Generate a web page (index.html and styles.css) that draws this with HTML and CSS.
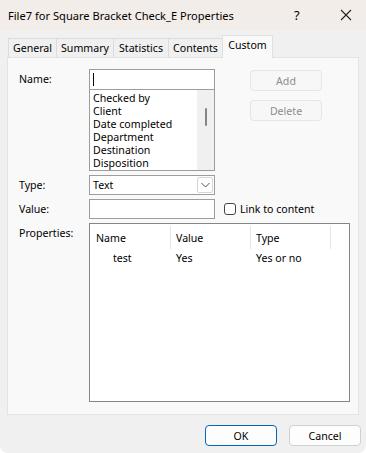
FILE: index.html
```html
<!DOCTYPE html>
<html lang="en">
<head>
    <meta charset="UTF-8">
    <title>File7 for Square Bracket Check_E Properties</title>
    <link rel="stylesheet" href="styles.css">
</head>
<body>
    <div class="window">
        <div class="titlebar">
            <span class="title">File7 for Square Bracket Check_E Properties</span>
            <span class="help">?</span>
            <span class="close">
                <svg width="12" height="12" viewBox="0 0 12 12"><path d="M1 1 L11 11 M11 1 L1 11" stroke="#222" stroke-width="1.1" fill="none"/></svg>
            </span>
        </div>

        <div class="tabs">
            <div class="tab tab-general">General</div>
            <div class="tab tab-summary">Summary</div>
            <div class="tab tab-stats">Statistics</div>
            <div class="tab tab-contents">Contents</div>
            <div class="tab tab-custom active">Custom</div>
        </div>

        <div class="panel">
            <div class="row row-name">
                <div class="lbl">Name:</div>
                <div class="combo">
                    <div class="field name-field"><span class="caret"></span></div>
                    <div class="listbox">
                        <ul>
                            <li>Checked by</li>
                            <li>Client</li>
                            <li>Date completed</li>
                            <li>Department</li>
                            <li>Destination</li>
                            <li>Disposition</li>
                        </ul>
                        <div class="scrollbar"><div class="thumb"></div></div>
                    </div>
                </div>
                <div class="side-buttons">
                    <button class="btn" disabled>Add</button>
                    <button class="btn" disabled>Delete</button>
                </div>
            </div>

            <div class="row">
                <div class="lbl">Type:</div>
                <div class="field select">
                    <span>Text</span>
                    <span class="drop">
                        <svg width="9" height="6" viewBox="0 0 9 6"><path d="M0.5 1 L4.5 5 L8.5 1" stroke="#555" stroke-width="1" fill="none"/></svg>
                    </span>
                </div>
            </div>

            <div class="row">
                <div class="lbl">Value:</div>
                <div class="field"></div>
                <label class="check"><span class="box"></span>Link to content</label>
            </div>

            <div class="row row-props">
                <div class="lbl">Properties:</div>
                <div class="listview">
                    <div class="lv-head">
                        <div class="col col-name">Name</div>
                        <div class="col col-value">Value</div>
                        <div class="col col-type">Type</div>
                    </div>
                    <div class="lv-row">
                        <div class="col col-name"><span class="indent">test</span></div>
                        <div class="col col-value">Yes</div>
                        <div class="col col-type">Yes or no</div>
                    </div>
                </div>
            </div>
        </div>

        <div class="footer">
            <button class="btn btn-default">OK</button>
            <button class="btn">Cancel</button>
        </div>
    </div>
</body>
</html>
```

FILE: styles.css
```css
/* --- 基本 --- */
body {
    margin: 0;
    background: #ffffff;
    font-family: "Noto Sans", "Open Sans", sans-serif;
    font-size: 10.6px;
    color: #000;
}

.window {
    width: 366px;
    height: 453px;
    background: #f0f0f0;
    border-radius: 0 0 8px 8px;
    overflow: hidden;
}

/* --- 標題列 --- */
.titlebar {
    height: 30px;
    background: #f3ede9;
    display: flex;
    align-items: center;
    font-size: 11.1px;
}

.title {
    padding-left: 8px;
    flex: 1;
}

.help {
    width: 14px;
    margin-right: 32px;
    font-size: 13px;
}

.close {
    display: flex;
    margin-right: 14px;
}

/* --- 分頁 --- */
.tabs {
    display: flex;
    align-items: flex-end;
    padding: 6px 0 0 8px;
    height: 21px;
    position: relative;
    z-index: 1;
}

.tab {
    height: 19px;
    line-height: 18px;
    text-align: center;
    border: 1px solid #dcdcdc;
    border-bottom: none;
    margin-right: -1px;
    background: #f0f0f0;
    box-sizing: border-box;
}

.tab-general { width: 49px; }
.tab-summary { width: 58px; }
.tab-stats { width: 56px; }
.tab-contents { width: 55px; }
.tab-custom { width: 51px; }

.tab.active {
    height: 23px;
    line-height: 19px;
    background: #f9f9f9;
    margin-bottom: -1px;
    border-color: #e0e0e0;
}

/* --- 內容面板 --- */
.panel {
    margin-left: 7px;
    width: 352px;
    border: 1px solid #e3e3e3;
    background: #f9f9f9;
    padding: 11px 0 0 11px;
    box-sizing: border-box;
    height: 358px;
}

.row {
    display: flex;
    align-items: center;
    margin-top: 4px;
}

.row-name {
    align-items: flex-start;
    margin-top: 0;
}

.lbl {
    width: 70px;
    flex-shrink: 0;
}

.row-name .lbl {
    padding-top: 3px;
}

.field {
    width: 126px;
    height: 20px;
    border: 1px solid #9d9d9d;
    background: #fff;
    box-sizing: border-box;
}

.combo {
    width: 126px;
}

.name-field {
    height: 21px;
    padding: 3px 0 0 3px;
}

.caret {
    display: block;
    width: 1px;
    height: 13px;
    background: #000;
}

.listbox {
    height: 81px;
    border: 1px solid #9d9d9d;
    border-top: none;
    background: #fff;
    box-sizing: border-box;
    display: flex;
}

.listbox ul {
    list-style: none;
    margin: 0;
    padding: 2px 0 0 3px;
    flex: 1;
    line-height: 13px;
}

.scrollbar {
    width: 17px;
    background: #f0f0f0;
    position: relative;
}

.thumb {
    position: absolute;
    left: 8px;
    top: 18px;
    width: 2px;
    height: 18px;
    background: #858585;
    border-radius: 1px;
}

.side-buttons {
    margin-left: 35px;
    display: flex;
    flex-direction: column;
    gap: 9px;
    padding-top: 1px;
}

/* --- 按鈕 --- */
.btn {
    width: 72px;
    height: 21px;
    font-family: inherit;
    font-size: 10.6px;
    background: #fdfdfd;
    border: 1px solid #d0d0d0;
    border-radius: 4px;
    padding: 0;
    color: #000;
}

.btn:disabled {
    background: #f7f7f7;
    border-color: #e5e5e5;
    color: #8d8d8d;
}

.btn-default {
    border-color: #0067c0;
}

/* --- 下拉 --- */
.select {
    display: flex;
    align-items: center;
    justify-content: space-between;
    padding-left: 3px;
}

.drop {
    width: 16px;
    height: 16px;
    margin-right: 1px;
    border: 1px solid #d5d5d5;
    border-radius: 2px;
    box-sizing: border-box;
    display: flex;
    align-items: center;
    justify-content: center;
}

/* --- 核取方塊 --- */
.check {
    display: flex;
    align-items: center;
    margin-left: 9px;
}

.box {
    width: 12px;
    height: 12px;
    border: 1px solid #444;
    border-radius: 3px;
    box-sizing: border-box;
    margin-right: 4px;
    background: #fff;
}

/* --- 屬性清單 --- */
.row-props {
    align-items: flex-start;
}

.row-props .lbl {
    padding-top: 3px;
}

.listview {
    width: 261px;
    height: 179px;
    border: 1px solid #82868c;
    background: #fff;
    box-sizing: border-box;
}

.lv-head,
.lv-row {
    display: flex;
}

.lv-head {
    height: 25px;
    padding-top: 2px;
    box-sizing: border-box;
}

.lv-head .col {
    border-right: 1px solid #e5e5e5;
    height: 23px;
    line-height: 24px;
}

.col {
    width: 80px;
    padding-left: 5px;
    box-sizing: border-box;
}

.col-name {
    width: 81px;
    padding-left: 6px;
}

.lv-row {
    height: 19px;
    line-height: 18px;
}

.indent {
    padding-left: 17px;
}

/* --- 底部按鈕 --- */
.footer {
    display: flex;
    justify-content: flex-end;
    gap: 12px;
    padding: 10px 5px 0 0;
}
```
